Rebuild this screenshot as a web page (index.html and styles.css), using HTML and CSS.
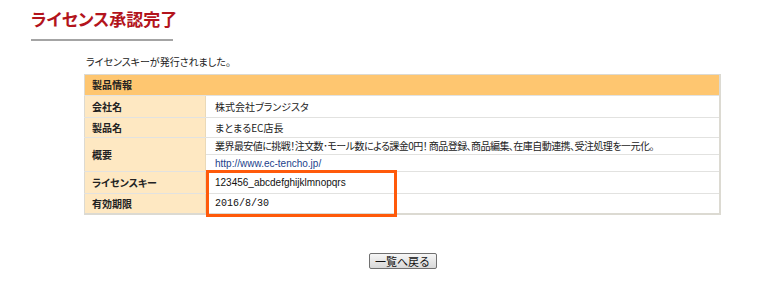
FILE: index.html
```html
<!DOCTYPE html>
<html>
<head>
    <meta charset="utf-8">
    <title>ライセンス承認完了</title>
    <link rel="stylesheet" href="styles.css">
</head>

<body>
    <h1 class="page-title">ライセンス承認完了</h1>
    <div class="title-rule"></div>

    <div class="content">
        <p class="notice">ライセンスキーが発行されました。</p>

        <table class="info">
            <tr class="row-head"><th colspan="2">製品情報</th></tr>
            <tr class="row-a"><th>会社名</th><td>株式会社ブランジスタ</td></tr>
            <tr class="row-b"><th>製品名</th><td>まとまるEC店長</td></tr>
            <tr class="row-c"><th rowspan="2">概要</th><td class="summary">業界最安値に挑戦！注文数･モール数による課金0円！ 商品登録、商品編集、在庫自動連携、受注処理を一元化。</td></tr>
            <tr class="row-c"><td><a class="site-link" href="#">http://www.ec-tencho.jp/</a></td></tr>
            <tr class="row-a"><th>ライセンスキー</th><td class="key">123456_abcdefghijklmnopqrs</td></tr>
            <tr class="row-b"><th>有効期限</th><td class="date">2016/8/30</td></tr>
        </table>

        <!-- 発行されたキーを強調する枠 -->
        <div class="highlight"></div>

        <div class="actions">
            <button class="back-btn">一覧へ戻る</button>
        </div>
    </div>
</body>
</html>
```

FILE: styles.css
```css
body{
    margin: 0;
    padding: 0;
    background-color: #fff;
    color: #222;
    font-family: "Noto Sans CJK JP", "Liberation Sans", sans-serif;
    font-feature-settings: "palt";}

.page-title{
    margin: 0;
    padding: 7px 0 0 31px;
    font-size: 17px;
    line-height: 24px;
    font-weight: bold;
    color: #b3141c;}

.title-rule{
    margin: 8px 0 0 31px;
    width: 142px;
    height: 2px;
    background-color: #a4a4a4;}

.content{
    position: relative;
    margin-left: 84px;
    padding-top: 14px;
    width: 637px;}

.notice{
    margin: 0 0 5px 2px;
    font-size: 10px;
    line-height: 14px;}

.info{
    width: 637px;
    border-collapse: collapse;
    border: 1px solid #dcdad2;
    border-right-width: 2px;
    border-bottom-width: 2px;
    font-size: 10px;}

.info th,
.info td{
    padding: 0 0 0 7px;
    border-bottom: 1px solid #e2e2e0;
    line-height: 14px;
    text-align: left;
    vertical-align: middle;}

.info th{
    width: 113px;
    background-color: #fee8c2;
    border-right: 1px solid #ead9b8;
    font-weight: bold;}

.info td{
    padding-left: 9px;
    background-color: #fff;}

.row-head th{
    height: 20px;
    background-color: #fec670;
    border-right: none;}

.row-a th, .row-a td{ height: 21px; }
.row-b th, .row-b td{ height: 19px; }
.row-c th, .row-c td{ height: 16px; }

.info td.summary{
    letter-spacing: -0.55px;}

.site-link{
    color: #22428c;
    text-decoration: none;
    font-family: "Liberation Sans", sans-serif;
    font-size: 10px;}

.info td.key{
    font-family: "Liberation Sans", sans-serif;
    font-size: 10px;
    color: #111;}

.info td.date{
    font-family: "Liberation Mono", monospace;
    font-size: 10px;
    color: #111;}

.highlight{
    position: absolute;
    left: 122px;
    top: 129px;
    width: 185px;
    height: 41px;
    border: 3px solid #ff5a0a;}

.actions{
    display: flex;
    justify-content: center;
    padding-top: 38px;}

.back-btn{
    width: 68px;
    height: 16px;
    padding: 0;
    border: 1px solid #707070;
    border-radius: 2px;
    background: linear-gradient(#f6f6f6, #d8d8d8);
    font-family: "Noto Sans CJK JP", sans-serif;
    font-size: 11px;
    line-height: 14px;
    color: #111;
    cursor: pointer;}
```
